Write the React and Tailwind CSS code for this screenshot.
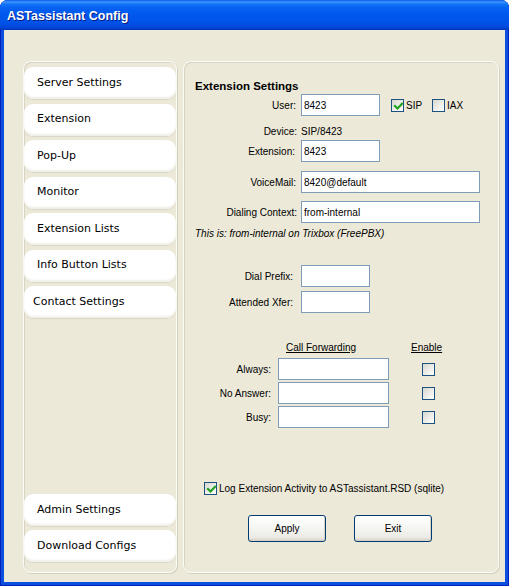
import React from "react";

function Check({ checked }) {
  return (
    <span className="relative block w-[13px] h-[13px] shrink-0 border border-[#1c5180] bg-[linear-gradient(135deg,#d8d8d2_0%,#f4f4f0_70%,#ffffff_100%)]">
      {checked && (
        <svg className="absolute left-[1px] top-[1px]" width="11" height="11" viewBox="0 0 11 11">
          <polyline points="2,5 4.5,7.5 9,2.8" fill="none" stroke="#21a121" strokeWidth="2.2" strokeLinecap="square" />
        </svg>
      )}
    </span>
  );
}

function Field({ w, value }) {
  return (
    <div className={`h-[22px] ${w} shrink-0 border border-[#7f9db9] bg-white pl-[2px] flex items-center leading-[13px]`}>
      {value}
    </div>
  );
}

function NavBtn({ label, tight }) {
  return (
    <div
      className={`h-[32px] shrink-0 flex items-center rounded-[9px] bg-white shadow-[0_1px_1px_#d9d6c7,inset_0_-2px_2px_#f0efe8] ${tight ? "pl-[9px]" : "pl-[13px]"}`}
    >
      {label}
    </div>
  );
}

function XPButton({ label }) {
  return (
    <div className="w-[78px] h-[27px] flex items-center justify-center rounded-[3px] border border-[#003c74] bg-[linear-gradient(to_bottom,#ffffff_0%,#f7f7f4_40%,#ecebe6_85%,#d6d0c5_100%)] shadow-[inset_-1px_-1px_0_#d8d2c6]">
      {label}
    </div>
  );
}

export default function App() {
  return (
    <div className="w-[509px] h-[586px] bg-white">
      <div className="w-[509px] h-[586px] flex flex-col rounded-t-[8px] overflow-hidden bg-[#0a4fe0] shadow-[inset_1px_0_#0020b8,inset_-1px_0_#0020b8,inset_0_-1px_#0020b8]">
        {/* Title bar */}
        <div className="h-[30px] shrink-0 flex items-center pl-[7px] pt-[2px] bg-[linear-gradient(to_bottom,#0a5ee8_0px,#3e94ff_2px,#1275f8_4px,#0662f2_8px,#0058ee_14px,#0055ea_20px,#004ee3_25px,#0044d6_28px,#0033b8_30px)]">
          <span className="font-['Liberation_Sans',Arial,sans-serif] font-bold text-[12.5px] text-white [text-shadow:1px_1px_0_#0a1a80]">
            ASTassistant Config
          </span>
        </div>
        {/* Body */}
        <div className="flex-1 mx-[4px] mb-[4px] bg-[#ece9d8] flex pt-[31px] pb-[9px] pl-[19px]">
          {/* Left nav panel */}
          <div className="w-[154px] flex flex-col rounded-[8px] border border-[#fbfbf7] shadow-[1px_1px_0_#d5d1bf,inset_1px_1px_0_#d8d4c3] pt-[5px] pb-[10px] font-['DejaVu_Sans',sans-serif] text-[11px] text-black">
            <div className="flex flex-col gap-[4.5px]">
              <NavBtn label="Server Settings" />
              <NavBtn label="Extension" />
              <NavBtn label="Pop-Up" />
              <NavBtn label="Monitor" />
              <NavBtn label="Extension Lists" />
              <NavBtn label="Info Button Lists" />
              <NavBtn label="Contact Settings" tight />
            </div>
            <div className="flex-1" />
            <div className="flex flex-col gap-[4px]">
              <NavBtn label="Admin Settings" />
              <NavBtn label="Download Configs" />
            </div>
          </div>
          {/* Right content panel */}
          <div className="ml-[6px] w-[316px] flex flex-col rounded-[8px] border border-[#fbfbf7] shadow-[1px_1px_0_#d5d1bf,inset_1px_1px_0_#d8d4c3] font-['Liberation_Sans',Arial,sans-serif] text-[10px] leading-[13px] text-black">
            <div className="mt-[18px] pl-[11px] h-[13px] font-bold text-[11.5px] leading-[13px]">Extension Settings</div>

            <div className="mt-[1px] flex items-center h-[22px]">
              <span className="w-[112px] text-right">User:</span>
              <div className="ml-[5px]"><Field w="w-[79px]" value="8423" /></div>
              <span className="ml-[11px]"><Check checked /></span>
              <span className="ml-[2px] w-[26px]">SIP</span>
              <Check />
              <span className="ml-[2px]">IAX</span>
            </div>

            <div className="mt-[9px] flex items-center h-[13px]">
              <span className="w-[113px] text-right">Device:</span>
              <span className="ml-[4px]">SIP/8423</span>
            </div>

            <div className="mt-[2px] flex items-center h-[22px]">
              <span className="w-[111px] text-right">Extension:</span>
              <div className="ml-[6px]"><Field w="w-[79px]" value="8423" /></div>
            </div>

            <div className="mt-[9px] flex items-center h-[22px]">
              <span className="w-[112px] text-right">VoiceMail:</span>
              <div className="ml-[5px]"><Field w="w-[179px]" value="8420@default" /></div>
            </div>

            <div className="mt-[8px] flex items-center h-[22px]">
              <span className="w-[113px] text-right">Dialing Context:</span>
              <div className="ml-[4px]"><Field w="w-[179px]" value="from-internal" /></div>
            </div>

            <div className="mt-[4px] pl-[11px] h-[13px] italic">This is: from-internal on Trixbox (FreePBX)</div>

            <div className="mt-[25px] flex items-center h-[22px]">
              <span className="w-[109px] text-right">Dial Prefix:</span>
              <div className="ml-[8px]"><Field w="w-[69px]" value="" /></div>
            </div>

            <div className="mt-[4px] flex items-center h-[22px]">
              <span className="w-[109px] text-right">Attended Xfer:</span>
              <div className="ml-[8px]"><Field w="w-[69px]" value="" /></div>
            </div>

            <div className="mt-[28px] flex items-center h-[13px]">
              <span className="ml-[102px] w-[125px] underline">Call Forwarding</span>
              <span className="underline">Enable</span>
            </div>

            <div className="mt-[4px] flex items-center h-[22px]">
              <span className="w-[87px] text-right">Always:</span>
              <div className="ml-[7px]"><Field w="w-[111px]" value="" /></div>
              <span className="ml-[33px]"><Check /></span>
            </div>
            <div className="mt-[2px] flex items-center h-[22px]">
              <span className="w-[87px] text-right">No Answer:</span>
              <div className="ml-[7px]"><Field w="w-[111px]" value="" /></div>
              <span className="ml-[33px]"><Check /></span>
            </div>
            <div className="mt-[2px] flex items-center h-[22px]">
              <span className="w-[87px] text-right">Busy:</span>
              <div className="ml-[7px]"><Field w="w-[111px]" value="" /></div>
              <span className="ml-[33px]"><Check /></span>
            </div>

            <div className="mt-[54px] flex items-center h-[13px] pl-[20px]">
              <Check checked />
              <span className="ml-[2px]">Log Extension Activity to ASTassistant.RSD (sqlite)</span>
            </div>

            <div className="mt-[20px] flex items-center pl-[64px] gap-[28px]">
              <XPButton label="Apply" />
              <XPButton label="Exit" />
            </div>
          </div>
        </div>
      </div>
    </div>
  );
}
